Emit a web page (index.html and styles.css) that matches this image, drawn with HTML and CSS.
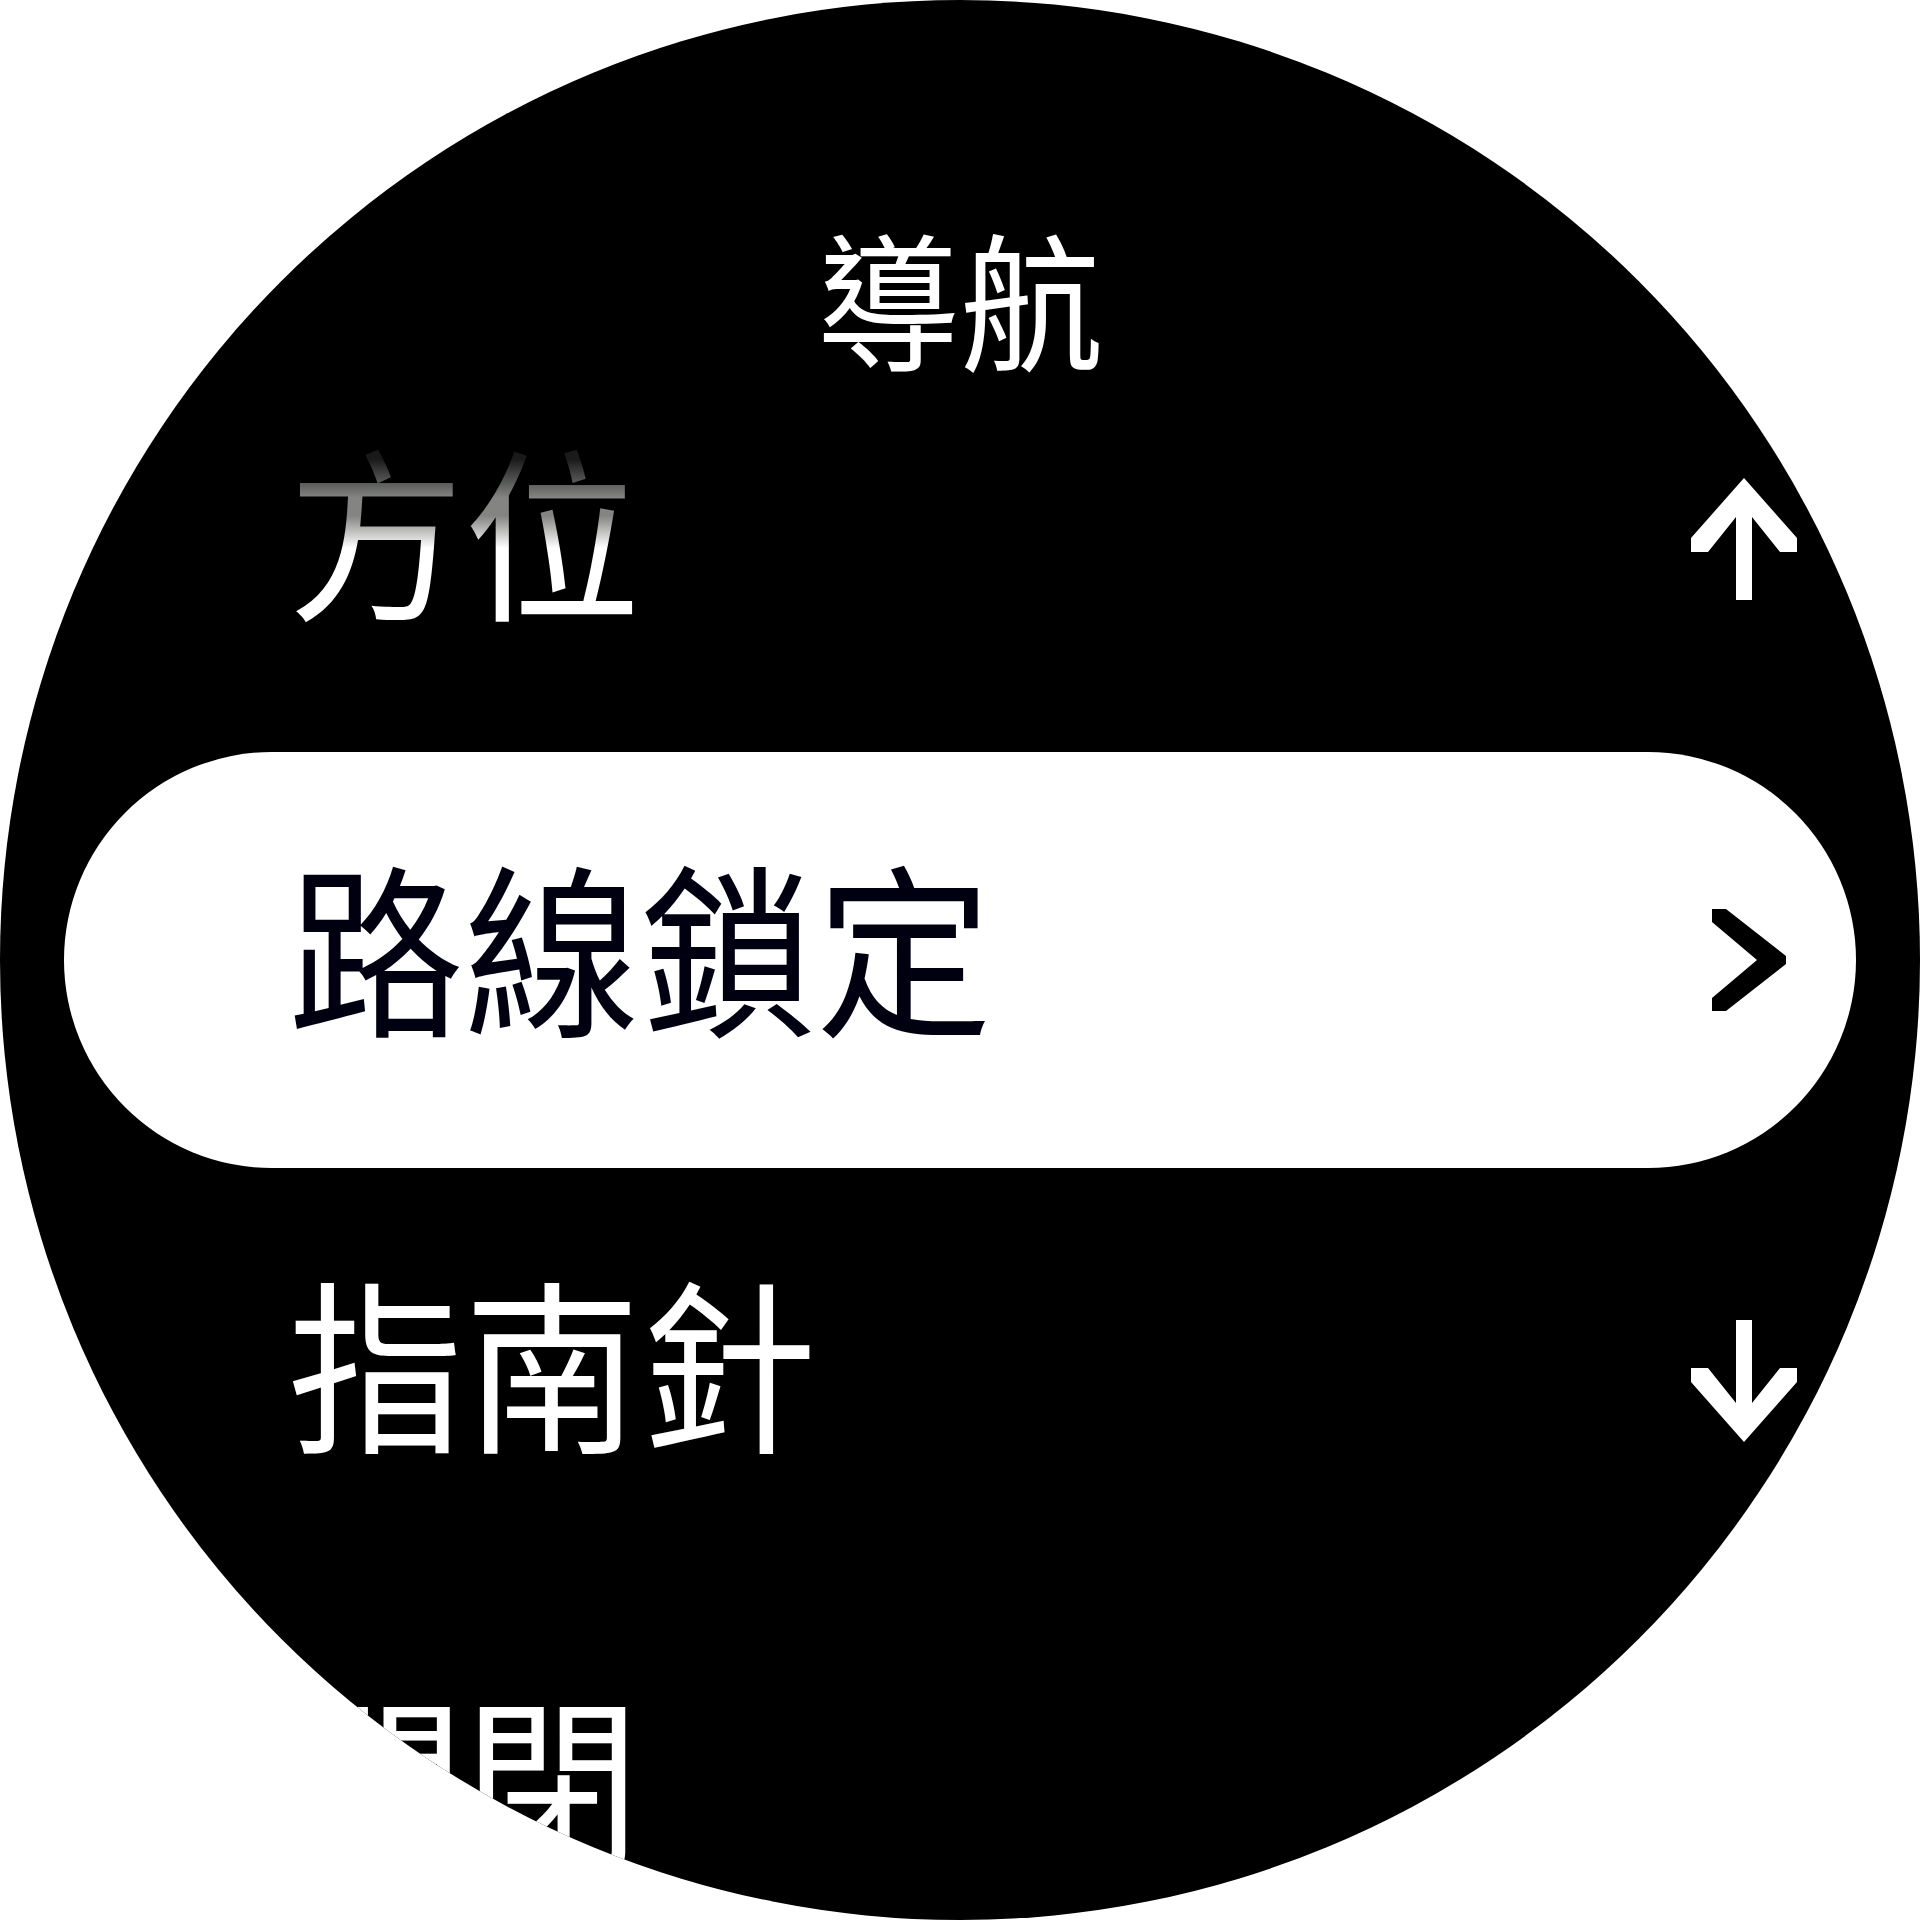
FILE: index.html
```
<!DOCTYPE html>
<html lang="zh-Hant">
<head>
  <meta charset="UTF-8">
  <meta name="viewport" content="width=device-width, initial-scale=1.0">
  <title>導航</title>
  <link rel="stylesheet" href="styles.css">
</head>
<body>
  <div class="watch">
    <h1 class="title"><span>導航</span></h1>
    <ul class="menu">
      <li class="item faded">
        <span class="label">方位</span>
        <svg class="icon" viewBox="0 0 112 124">
          <path d="M56 2L109 62V76H92L64 41V124H48V41L20 76H3V62Z"/>
        </svg>
      </li>
      <li class="item selected">
        <span class="label">路線鎖定</span>
        <svg class="icon" viewBox="0 0 112 124">
          <path d="M24 11H38L98 58V66L38 113H24V100L69 62L24 24Z"/>
        </svg>
      </li>
      <li class="item">
        <span class="label">指南針</span>
        <svg class="icon down" viewBox="0 0 112 124">
          <path d="M56 122L109 62V48H92L64 83V0H48V83L20 48H3V62Z"/>
        </svg>
      </li>
      <li class="item">
        <span class="label">關閉</span>
      </li>
    </ul>
  </div>
</body>
</html>
```
FILE: styles.css
```
body, html {
  margin: 0;
  padding: 0;
  background: #fff;
  overflow: hidden;
  font-family: "Noto Sans CJK TC", sans-serif;
}
.watch {
  width: 1920px;
  height: 1920px;
  clip-path: circle(50%);
  background: #000;
  color: #fff;
  overflow: hidden;
}
.title {
  display: flex;
  justify-content: center;
  height: 336px;
  margin: 0;
  padding-top: 223px;
  box-sizing: border-box;
  font-size: 144px;
  font-weight: 400;
  line-height: 144px;
}
.title span {
  transform: scaleY(1.03);
}
.menu {
  margin: 0;
  padding: 0 64px;
  list-style: none;
}
.item {
  display: flex;
  align-items: center;
  justify-content: space-between;
  height: 416px;
  padding: 0 56px 0 224px;
  box-sizing: border-box;
}
.label {
  font-size: 176px;
  line-height: 176px;
  padding-bottom: 16px;
  transform: translateY(-8px) scaleY(1.05);
}
.icon {
  width: 112px;
  height: 124px;
  fill: currentColor;
}
/* first row fades out under the title */
.faded .label {
  background: linear-gradient(#1a1a1a 12%, #505250 22%, #848582 31%, #848582 40%, #fff 56%);
  -webkit-background-clip: text;
  background-clip: text;
  color: transparent;
}
.faded .icon {
  margin-bottom: 12px;
}
.icon.down {
  margin-top: 12px;
}
.selected {
  background: #fff;
  color: #000010;
  border-radius: 208px;
}
.selected .icon {
  fill: #000;
}
```
